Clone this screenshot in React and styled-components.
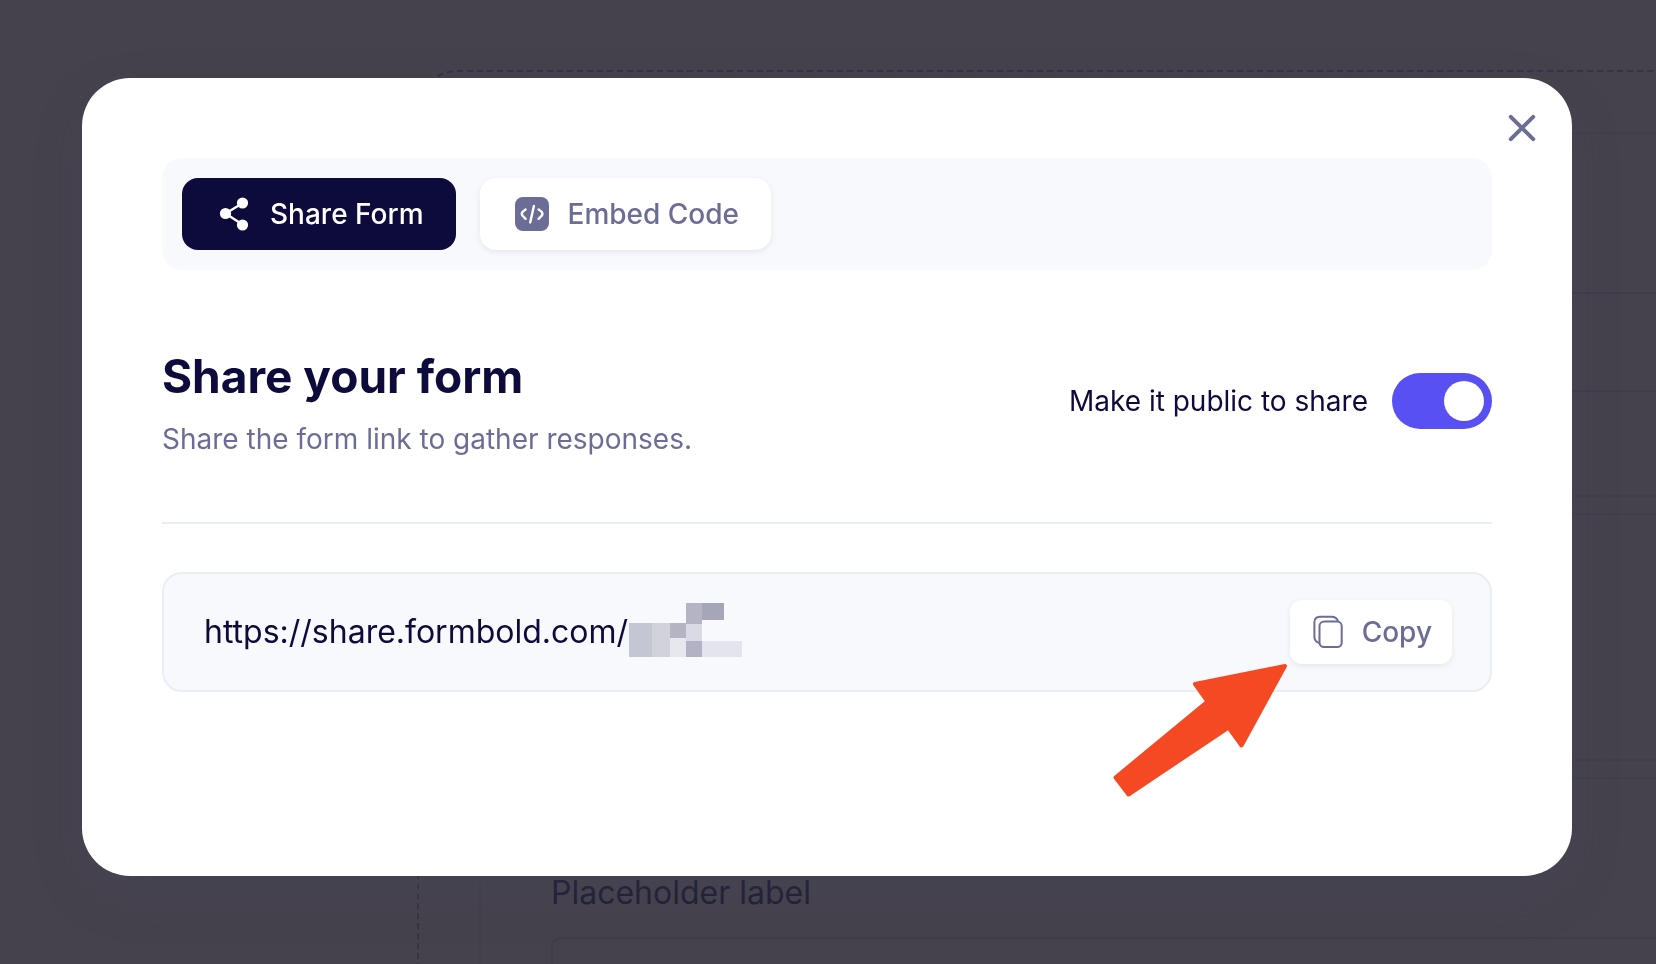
import React, { useState } from "react";
import styled, { createGlobalStyle, css } from "styled-components";

const color = {
  navy: "#0d0a3c",
  slate: "#6c6d96",
  panel: "#f8f9fd",
  line: "#e9eef5",
  violet: "#5850f3",
  arrow: "#f54924",
};

const GlobalStyle = createGlobalStyle`
  *, *::before, *::after { box-sizing: border-box; }
  body {
    margin: 0;
    overflow: hidden;
    background: #45424c;
    color: ${color.navy};
    font-family: Inter, "Liberation Sans", sans-serif;
    font-size: 28px;
  }
  button, input { font: inherit; color: inherit; }
`;

/* Dimmed form builder behind the dialog */
const Builder = styled.main`
  height: 100vh;
  padding: 70px 0 0 417px;
  overflow: hidden;
`;

const Canvas = styled.div`
  display: flex;
  flex-direction: column;
  gap: 16px;
  padding: 60px 0 0 60px;
  border: 2px dashed #363345;
  border-width: 2px 0 0 2px;
  border-top-left-radius: 40px;
`;

const FieldCard = styled.section`
  display: flex;
  flex-direction: column;
  flex: none;
  height: ${(p) => p.$height}px;
  padding: 90px 0 0 70px;
  border: 2px solid #423f4b;
  border-right: 0;
`;

const FieldLabel = styled.label`
  color: #211f34;
  font-size: 32px;
  line-height: 48px;
`;

const FieldBox = styled.input`
  height: 100px;
  margin-top: 20px;
  border: 2px solid #3f3d4a;
  border-right: 0;
  border-radius: 10px 0 0 10px;
  background: transparent;
`;

/* Dialog */
const Overlay = styled.div`
  position: fixed;
  inset: 0;
  display: flex;
  padding: 78px 84px 88px 82px;
`;

const Dialog = styled.section`
  position: relative;
  flex: 1;
  padding: 80px;
  border-radius: 48px;
  background: #fff;
  box-shadow: 0 20px 50px rgba(74, 74, 105, 0.2);
`;

const CloseButton = styled.button`
  position: absolute;
  top: 30px;
  right: 30px;
  display: flex;
  padding: 0;
  border: 0;
  background: none;
  color: ${color.slate};
  cursor: pointer;
`;

const TabBar = styled.nav`
  display: flex;
  gap: 24px;
  padding: 20px;
  border-radius: 20px;
  background: ${color.panel};
`;

const raised = css`
  background: #fff;
  color: ${color.slate};
  box-shadow: 0 2px 6px rgba(13, 10, 60, 0.08);
`;

const Tab = styled.button`
  display: flex;
  align-items: center;
  gap: 16px;
  height: 72px;
  padding: 0 32px;
  border: 0;
  border-radius: 16px;
  font-weight: 500;
  cursor: pointer;
  ${(p) => (p.$active ? css`background: ${color.navy}; color: #fff;` : raised)}
`;

const Header = styled.header`
  display: flex;
  align-items: center;
  justify-content: space-between;
  padding: 72px 0 62px;
  border-bottom: 2px solid ${color.line};
`;

const Title = styled.h1`
  margin: 0;
  font-size: 46px;
  font-weight: 700;
  line-height: 68px;
`;

const Subtitle = styled.p`
  margin: 8px 0 0;
  color: ${color.slate};
  line-height: 42px;
`;

const SwitchLabel = styled.label`
  display: flex;
  align-items: center;
  gap: 24px;
  cursor: pointer;
`;

const Switch = styled.input`
  appearance: none;
  display: flex;
  width: 100px;
  height: 56px;
  margin: 0;
  padding: 8px;
  border-radius: 28px;
  background: #c9cbe0;
  cursor: pointer;

  &::before {
    content: "";
    width: 40px;
    height: 40px;
    border-radius: 50%;
    background: #fff;
  }

  &:checked {
    justify-content: flex-end;
    background: ${color.violet};
  }
`;

const LinkBox = styled.div`
  display: flex;
  align-items: center;
  height: 120px;
  margin-top: 48px;
  padding: 0 38px 0 40px;
  border: 2px solid ${color.line};
  border-radius: 20px;
  background: ${color.panel};
`;

const LinkInput = styled.input`
  field-sizing: content;
  padding: 0;
  border: 0;
  outline: 0;
  background: none;
  font-size: 32px;
  line-height: 48px;
`;

const CopyButton = styled.button`
  display: flex;
  align-items: center;
  gap: 16px;
  height: 64px;
  margin-left: auto;
  padding: 0 20px;
  border: 0;
  border-radius: 12px;
  font-weight: 500;
  cursor: pointer;
  ${raised}
`;

const Pointer = styled.svg`
  position: absolute;
  right: 280px;
  top: 584px;
  pointer-events: none;
`;

const CloseIcon = () => (
  <svg width="40" height="40" fill="none" stroke="currentColor" strokeWidth="4" strokeLinecap="round" aria-hidden="true">
    <path d="M8.8 8.8 31.2 31.2M31.2 8.8 8.8 31.2" />
  </svg>
);

const ShareIcon = () => (
  <svg width="40" height="40" fill="currentColor" aria-hidden="true">
    <path d="M28.5 9.2 11.5 19.5 28.5 30.6" fill="none" stroke="currentColor" strokeWidth="2.4" />
    <circle cx="11.5" cy="19.5" r="5.6" />
    <circle cx="28.5" cy="9" r="5.6" />
    <circle cx="28.5" cy="31" r="5.6" />
  </svg>
);

const CodeIcon = () => (
  <svg width="40" height="40" fill="none" aria-hidden="true">
    <rect x="3" y="3" width="34" height="34" rx="8" fill="currentColor" />
    <path
      d="M13.6 15.4 10.6 17.8Q9 19.8 10.6 21.8L13.6 24.8M26.6 15.4 29.6 17.8Q31.2 19.8 29.6 21.8L26.6 24.8M21.9 12 18.2 28.4"
      stroke="#fff"
      strokeWidth="2.4"
      strokeLinecap="round"
    />
  </svg>
);

const CopyIcon = () => (
  <svg width="36" height="36" fill="none" stroke="currentColor" strokeWidth="2" strokeLinecap="round" aria-hidden="true">
    <rect x="9.5" y="7.6" width="22.2" height="25.4" rx="4.5" />
    <path d="M8.6 28.8Q4.4 27 4.4 23V8.4Q4.4 2.8 10 2.8H21.6Q26.4 2.8 28 7" />
  </svg>
);

const HiddenSlug = () => (
  <svg width="114" height="66" aria-hidden="true" shapeRendering="crispEdges">
    <rect x="1" y="24" width="23" height="34" fill="#c5c6d4" />
    <rect x="24" y="24" width="18" height="34" fill="#d2d2dd" />
    <rect x="42" y="24" width="16" height="15" fill="#b5b4c5" />
    <rect x="42" y="39" width="16" height="19" fill="#e7e8ee" />
    <rect x="58" y="4" width="16" height="21" fill="#b5b4c5" />
    <rect x="58" y="25" width="16" height="17" fill="#dadae5" />
    <rect x="58" y="42" width="16" height="16" fill="#b3b2c4" />
    <rect x="74" y="4" width="22" height="17" fill="#a6a6b9" />
    <rect x="74" y="42" width="40" height="16" fill="#e4e4ee" />
  </svg>
);

const ArrowPointer = () => (
  <Pointer width="180" height="140" aria-hidden="true">
    <path
      d="M173 4 83 22 95.5 39.5 3.500 115.500 16.500 132.500 116.500 65.500 129.500 83.500Z"
      fill={color.arrow}
      stroke={color.arrow}
      strokeWidth="4"
      strokeLinejoin="round"
    />
  </Pointer>
);

export default function App() {
  const [isPublic, setIsPublic] = useState(true);

  return (
    <>
      <GlobalStyle />
      <Builder>
        <Canvas>
          <FieldCard $height={365}>
            <FieldLabel htmlFor="first-field">Placeholder label</FieldLabel>
            <FieldBox id="first-field" />
          </FieldCard>
          <FieldCard $height={248} />
          <FieldCard $height={365}>
            <FieldLabel htmlFor="third-field">Placeholder label</FieldLabel>
            <FieldBox id="third-field" />
          </FieldCard>
        </Canvas>
      </Builder>
      <Overlay>
        <Dialog role="dialog" aria-labelledby="share-title">
          <CloseButton aria-label="Close"><CloseIcon /></CloseButton>
          <TabBar>
            <Tab $active><ShareIcon />Share Form</Tab>
            <Tab><CodeIcon />Embed Code</Tab>
          </TabBar>
          <Header>
            <div>
              <Title id="share-title">Share your form</Title>
              <Subtitle>Share the form link to gather responses.</Subtitle>
            </div>
            <SwitchLabel>
              Make it public to share
              <Switch
                type="checkbox"
                role="switch"
                checked={isPublic}
                onChange={(e) => setIsPublic(e.target.checked)}
              />
            </SwitchLabel>
          </Header>
          <LinkBox>
            <LinkInput aria-label="Form link" readOnly value="https://share.formbold.com/" />
            <HiddenSlug />
            <CopyButton><CopyIcon />Copy</CopyButton>
          </LinkBox>
          <ArrowPointer />
        </Dialog>
      </Overlay>
    </>
  );
}
